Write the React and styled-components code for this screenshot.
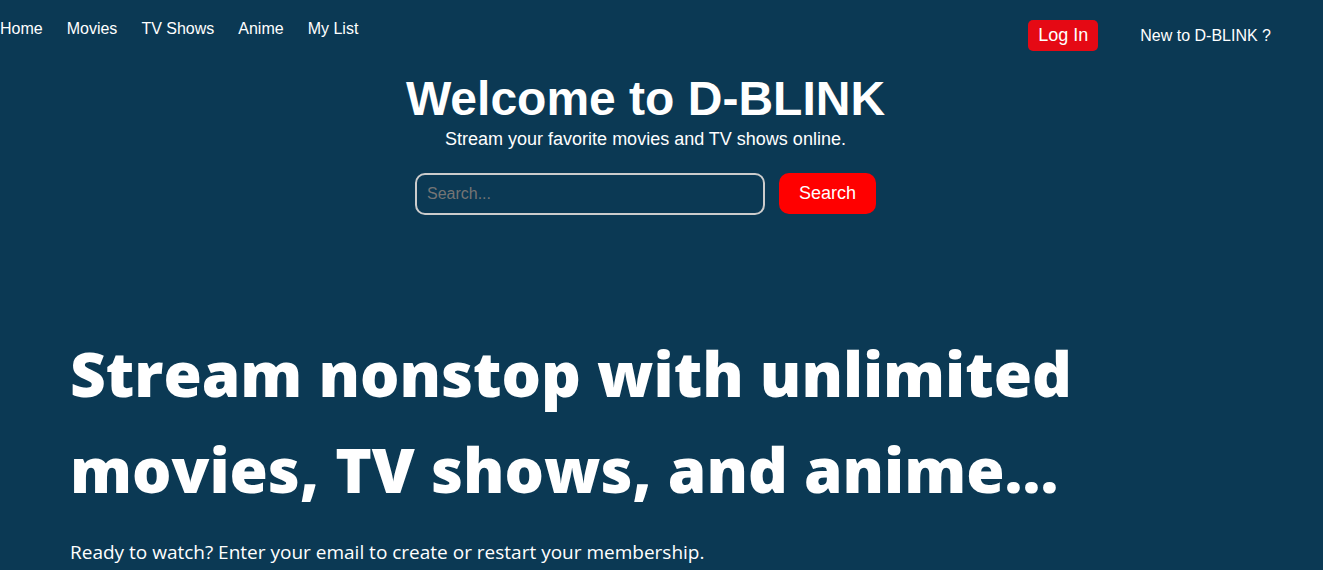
import React from "react";
import styled, { createGlobalStyle } from "styled-components";

const GlobalStyle = createGlobalStyle`
  * { box-sizing: border-box; margin: 0; padding: 0; }
  html { background: #0b3954; }
  body { color: #fff; font-family: "Liberation Sans", Arial, sans-serif; font-size: 16px; overflow-x: hidden; }
`;

const Page = styled.div`
  min-height: 100vh;
  background: #0b3954;
`;

const Header = styled.header`
  display: flex;
  align-items: flex-start;
  justify-content: space-between;
  padding: 20px 52px 0 0;
`;

const Nav = styled.nav`
  display: flex;
  gap: 24px;
`;

const NavLink = styled.a`
  color: #fff;
  line-height: 18px;
  text-decoration: none;
`;

const Account = styled.div`
  display: flex;
  align-items: center;
  gap: 42px;
`;

const Button = styled.button`
  border: none;
  color: #fff;
  cursor: pointer;
  font-family: inherit;
  font-size: 18px;
`;

const LoginButton = styled(Button)`
  padding: 5px 10px;
  border-radius: 5px;
  background: #e50914;
  line-height: 21px;
`;

const Hero = styled.section`
  display: flex;
  flex-direction: column;
  align-items: center;
  padding: 20px 32px 0 0;
`;

const Title = styled.h1`
  font-size: 48px;
  line-height: 56px;
`;

const Tagline = styled.p`
  font-size: 18px;
  line-height: 24px;
`;

const SearchForm = styled.form`
  display: flex;
  align-items: flex-start;
  gap: 14px;
  margin-top: 22px;
`;

const SearchInput = styled.input`
  width: 350px;
  height: 42px;
  padding: 10px;
  border: 2px solid #ccc;
  border-radius: 10px;
  background: transparent;
  color: #fff;
  font-family: inherit;
  font-size: 16px;
  &::placeholder { color: #757575; }
`;

const SearchButton = styled(Button)`
  padding: 10px 20px;
  border-radius: 10px;
  background: #f00;
  line-height: 21px;
`;

const Promo = styled.section`
  padding: 110px 70px 0;
`;

const PromoTitle = styled.h2`
  max-width: 1040px;
  font-family: "Open Sans", "Noto Sans", sans-serif;
  font-size: 62px;
  font-weight: 800;
  line-height: 96px;
`;

const PromoText = styled.p`
  margin-top: 20px;
  font-family: "Open Sans", "Noto Sans", sans-serif;
  font-size: 19px;
  line-height: 30px;
`;

const links = ["Home", "Movies", "TV Shows", "Anime", "My List"];

export default function App() {
  return (
    <Page>
      <GlobalStyle />
      <Header>
        <Nav>
          {links.map((label) => (
            <NavLink key={label} href="#">{label}</NavLink>
          ))}
        </Nav>
        <Account>
          <LoginButton type="button">Log In</LoginButton>
          <NavLink href="#">New to D-BLINK ?</NavLink>
        </Account>
      </Header>
      <main>
        <Hero>
          <Title>Welcome to D-BLINK</Title>
          <Tagline>Stream your favorite movies and TV shows online.</Tagline>
          <SearchForm role="search" onSubmit={(e) => e.preventDefault()}>
            <SearchInput type="text" aria-label="Search" placeholder="Search..." />
            <SearchButton type="submit">Search</SearchButton>
          </SearchForm>
        </Hero>
        <Promo>
          <PromoTitle>Stream nonstop with unlimited movies, TV shows, and anime...</PromoTitle>
          <PromoText>Ready to watch? Enter your email to create or restart your membership.</PromoText>
        </Promo>
      </main>
    </Page>
  );
}
